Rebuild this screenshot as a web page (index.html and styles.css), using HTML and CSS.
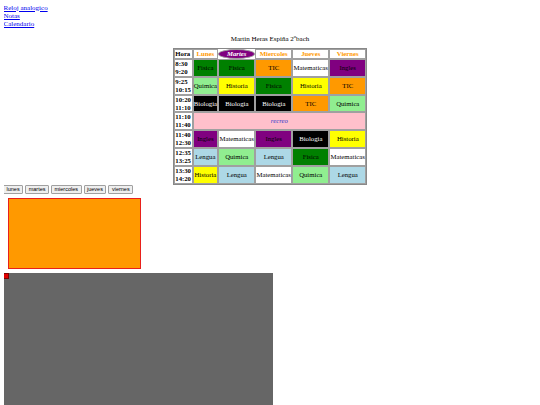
FILE: index.html
```html
<!DOCTYPE html>
<html>
<head>
<meta charset="utf-8">
<link rel="stylesheet" href="styles.css">
</head>
<body>
<div class="links">
<a href="#">Reloj analogico</a><br>
<a href="#">Notas</a><br>
<a href="#">Calendario</a>
</div>
<p class="title">Martin Heras Espiña 2<sup>o</sup>bach</p>
<table class="horario">
<tr>
<th class="hora">Hora</th>
<th class="dia">Lunes</th>
<th class="dia martes">Martes</th>
<th class="dia">Miercoles</th>
<th class="dia">Jueves</th>
<th class="dia">Viernes</th>
</tr>
<tr>
<th class="hora">8:30<br>9:20</th>
<td class="fisica">Fisica</td><td class="fisica">Fisica</td><td class="tic">TIC</td><td class="mate">Matematicas</td><td class="ingles">Ingles</td>
</tr>
<tr>
<th class="hora">9:25<br>10:15</th>
<td class="quimica">Quimica</td><td class="historia">Historia</td><td class="fisica">Fisica</td><td class="historia">Historia</td><td class="tic">TIC</td>
</tr>
<tr>
<th class="hora">10:20<br>11:10</th>
<td class="bio">Biologia</td><td class="bio">Biologia</td><td class="bio">Biologia</td><td class="tic">TIC</td><td class="quimica">Quimica</td>
</tr>
<tr>
<th class="hora">11:10<br>11:40</th>
<td class="recreo" colspan="5">recreo</td>
</tr>
<tr>
<th class="hora">11:40<br>12:30</th>
<td class="ingles">Ingles</td><td class="mate">Matematicas</td><td class="ingles">Ingles</td><td class="bio">Biologia</td><td class="historia">Historia</td>
</tr>
<tr>
<th class="hora">12:35<br>13:25</th>
<td class="lengua">Lengua</td><td class="quimica">Quimica</td><td class="lengua">Lengua</td><td class="fisica">Fisica</td><td class="mate">Matematicas</td>
</tr>
<tr>
<th class="hora">13:30<br>14:20</th>
<td class="historia">Historia</td><td class="lengua">Lengua</td><td class="mate">Matematicas</td><td class="quimica">Quimica</td><td class="lengua">Lengua</td>
</tr>
</table>
<div class="botones">
<button>lunes</button>
<button>martes</button>
<button>miercoles</button>
<button>jueves</button>
<button>viernes</button>
</div>
<div class="caja"></div>
<div class="lienzo"><div class="punto"></div></div>
</body>
</html>
```
FILE: styles.css
```css
html, body {
  margin: 0;
  padding: 0;
  background: #fff;
}
body {
  margin: 3.5px;
  font-family: "Liberation Serif", "Times New Roman", serif;
  font-size: 7px;
  line-height: 8px;
  color: #000;
}
.links a {
  color: #0000ee;
  text-decoration: underline;
}
.title {
  text-align: center;
  margin: 7px 0 5.5px 0;
  line-height: 8px;
}
.title sup {
  font-size: 4.5px;
  line-height: 0;
  vertical-align: 3px;
}
.horario {
  margin: 0 auto;
  border: 0.5px solid #888;
  border-spacing: 0.5px;
  border-collapse: separate;
  font-size: 6.75px;
  line-height: 7.9px;
}
.horario th, .horario td {
  border: 0.5px solid #a0a0a0;
  padding: 0;
  text-align: center;
  vertical-align: middle;
  white-space: nowrap;
}
.horario td {
  padding: 0 0.25px;
}
.horario th.hora {
  text-align: left;
  font-weight: bold;
  padding: 0 0.5px;
}
.horario th.dia {
  color: #ff9900;
  font-weight: bold;
  height: 8px;
}
.horario th.martes {
  background: #800080;
  color: #fff;
  font-style: italic;
  border-radius: 50%;
}
.fisica { background: #008000; }
.quimica { background: #90ee90; }
.historia { background: #ffff00; }
.tic { background: #ff9900; }
.mate { background: #ffffff; }
.ingles { background: #800080; }
.bio { background: #000000; color: #fff; }
.lengua { background: #add8e6; }
.recreo {
  background: #ffc0cb;
  color: #3333cc;
  font-style: italic;
}
.botones {
  display: flex;
  gap: 2px;
  margin-top: 0;
  margin-left: -0.5px;
}
.botones button {
  font-family: "Liberation Sans", Arial, sans-serif;
  font-size: 5.5px;
  line-height: 6px;
  padding: 0.5px 2.5px;
  margin: 0;
  border: 1px solid #a0a0a0;
  border-radius: 1px;
  background: #efefef;
  color: #000;
}
.caja {
  width: 131px;
  height: 68.5px;
  margin: 4.5px 0 0 4.5px;
  background: #ff9900;
  border: 1.5px solid #e8201c;
}
.lienzo {
  width: 270px;
  height: 140px;
  margin: 4px 0 0 -0.5px;
  background: #666666;
}
.punto {
  width: 4px;
  height: 4px;
  background: #e00000;
  border: 0.5px solid #800000;
}
```
